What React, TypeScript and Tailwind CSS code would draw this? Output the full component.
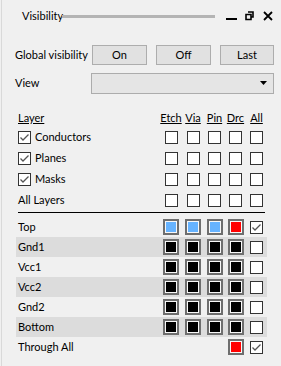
import React from 'react'

const FONT = { fontFamily: 'Lato, "Noto Sans", sans-serif' }

const COLS = ['Etch', 'Via', 'Pin', 'Drc', 'All']
const CELL_W = ['w-[22px]', 'w-[22px]', 'w-[21px]', 'w-[21px]', 'w-[21px]']

type Layer = { name: string; colors: (string | null)[]; all: boolean }

const LAYERS: Layer[] = [
  { name: 'Top', colors: ['#66b3ff', '#66b3ff', '#66b3ff', '#ff0000'], all: true },
  { name: 'Gnd1', colors: ['#000', '#000', '#000', '#000'], all: false },
  { name: 'Vcc1', colors: ['#000', '#000', '#000', '#000'], all: false },
  { name: 'Vcc2', colors: ['#000', '#000', '#000', '#000'], all: false },
  { name: 'Gnd2', colors: ['#000', '#000', '#000', '#000'], all: false },
  { name: 'Bottom', colors: ['#000', '#000', '#000', '#000'], all: false },
  { name: 'Through All', colors: [null, null, null, '#ff0000'], all: true },
]

function Check({ checked }: { checked?: boolean }) {
  return (
    <div className="w-[13px] h-[13px] border border-[#333] bg-white flex items-center justify-center">
      {checked && (
        <svg width="11" height="11" viewBox="0 0 11 11">
          <path d="M1.5 5.5 L4 8 L9.5 2.5" fill="none" stroke="#555" strokeWidth="1.3" />
        </svg>
      )}
    </div>
  )
}

function Swatch({ color }: { color: string }) {
  return (
    <div className="w-[16px] h-[16px] border-2 border-[#6e6e6e] bg-[#f8f8f8] p-[1px]">
      <div className="w-full h-full" style={{ background: color }} />
    </div>
  )
}

function Btn({ label, w }: { label: string; w: string }) {
  return (
    <div className={`${w} h-[20px] border border-[#adadad] bg-[#e1e1e1] flex items-center justify-center`}>
      {label}
    </div>
  )
}

export default function App() {
  return (
    <div className="w-[281px] h-[366px] bg-[#f0f0f0] text-[11px] text-black overflow-hidden" style={FONT}>
      <div className="h-full ml-[1px] border-l border-[#d9d9d9]">
        {/* タイトルバー */}
        <div className="h-[32px] flex items-center pl-[20px]">
          <span className="w-[40px]">Visibility</span>
          <div className="w-[153px] h-[3px] bg-[#b4b4b4]" />
          <svg className="ml-[11px]" width="11" height="12" viewBox="0 0 11 12">
            <rect x="0" y="8" width="11" height="2" fill="#000" />
          </svg>
          <svg className="ml-[8px]" width="9" height="10" viewBox="0 0 9 10">
            <path d="M3 1 H8 V6 H6.5 M1 3.5 H6 V8.5 H1 Z" fill="none" stroke="#000" strokeWidth="1.6" />
          </svg>
          <svg className="ml-[9px]" width="10" height="10" viewBox="0 0 10 10">
            <path d="M1 1 L9 9 M9 1 L1 9" stroke="#000" strokeWidth="1.8" />
          </svg>
        </div>

        {/* グローバル表示 */}
        <div className="mt-[13px] h-[20px] flex items-center pl-[13px]">
          <span className="w-[77px]">Global visibility</span>
          <div className="flex gap-[9px]">
            <Btn label="On" w="w-[55px]" />
            <Btn label="Off" w="w-[55px]" />
            <Btn label="Last" w="w-[54px]" />
          </div>
        </div>
        <div className="mt-[8px] h-[20px] flex items-center pl-[13px]">
          <span className="w-[76px]">View</span>
          <div className="w-[183px] h-[21px] border border-[#acacac] bg-[#e5e5e5] flex items-center justify-end pr-[6px]">
            <svg width="7" height="4" viewBox="0 0 7 4">
              <path d="M0 0 H7 L3.5 4 Z" fill="#000" />
            </svg>
          </div>
        </div>

        {/* レイヤーのヘッダ */}
        <div className="mt-[17px] mx-[14px] flex items-center h-[17px]">
          <span className="flex-1 pl-[2px] underline">Layer</span>
          {COLS.map((c, i) => (
            <span key={c} className={`${CELL_W[i]} text-center underline`}>
              {c}
            </span>
          ))}
        </div>
        {['Conductors', 'Planes', 'Masks', 'All Layers'].map((n, idx) => (
          <div key={n} className="mx-[14px] flex items-center h-[21px]">
            <div className="flex-1 pl-[2px] flex items-center gap-[4px]">
              {idx < 3 && <Check checked />}
              <span>{n}</span>
            </div>
            {COLS.map((c, i) => (
              <div key={c} className={`${CELL_W[i]} flex justify-center`}>
                <Check />
              </div>
            ))}
          </div>
        ))}

        <div className="mt-[1px] mx-[16px] h-[1px] bg-black" />

        {/* レイヤー一覧 */}
        <div className="mt-[4px]">
          {LAYERS.map((l, r) => (
            <div
              key={l.name}
              className={`mx-[14px] flex items-center h-[20px] ${r % 2 === 1 ? 'bg-[#dcdcdc]' : ''}`}
            >
              <span className="flex-1 pl-[2px]">{l.name}</span>
              {l.colors.map((c, i) => (
                <div key={i} className={`${CELL_W[i]} flex justify-center`}>
                  {c && <Swatch color={c} />}
                </div>
              ))}
              <div className={`${CELL_W[4]} flex justify-center`}>
                <Check checked={l.all} />
              </div>
            </div>
          ))}
        </div>
      </div>
    </div>
  )
}
